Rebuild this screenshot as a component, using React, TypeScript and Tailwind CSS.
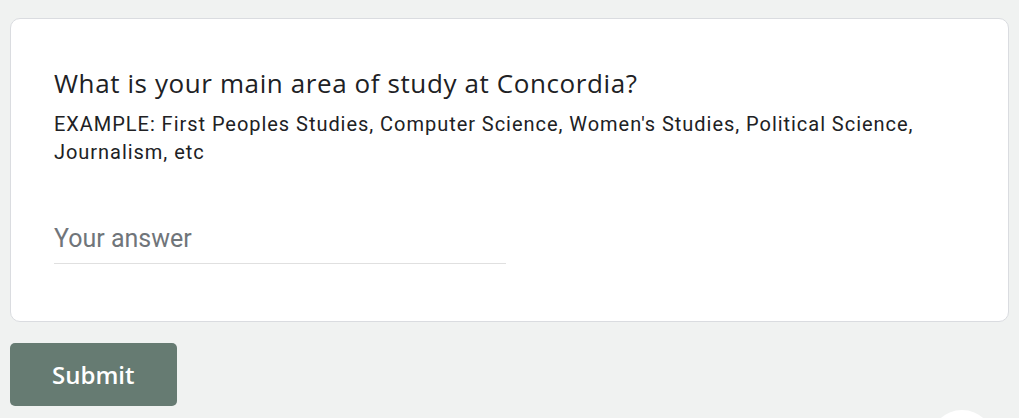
export default function App() {
  return (
    <div className="relative h-[418px] w-[1019px] overflow-hidden bg-[#f0f2f1]">
      <div className="px-[10px] pt-[18px]">
        <div className="h-[304px] rounded-[10px] border border-[#dadce0] bg-white pl-[43px] pr-6 pt-[48px]">
          <h2 className="font-['Open_Sans',sans-serif] text-[26px] leading-[32px] tracking-[0.6px] text-[#202124]">
            What is your main area of study at Concordia?
          </h2>
          <p className="mt-[11px] font-['Roboto',sans-serif] text-[20px] leading-[28px] tracking-[0.96px] text-[#202124]">
            EXAMPLE: First Peoples Studies, Computer Science, Women's Studies, Political Science,
            <br />
            Journalism, etc
          </p>
          <div className="mt-[57px] w-[452px] border-b border-[#e0e0e0] pb-[8px] font-['Roboto',sans-serif] text-[25px] leading-[32px] text-[#70757a]">
            Your answer
          </div>
        </div>
      </div>
      <div className="px-[10px] pt-[21px]">
        <button className="flex h-[63px] w-[167px] items-center rounded-[5px] bg-[#667b72] pl-[42px] font-['Open_Sans',sans-serif] text-[24px] font-semibold text-white">
          Submit
        </button>
      </div>
      <div className="absolute left-[930px] top-[410px] h-[64px] w-[64px] rounded-full bg-white" />
    </div>
  )
}
